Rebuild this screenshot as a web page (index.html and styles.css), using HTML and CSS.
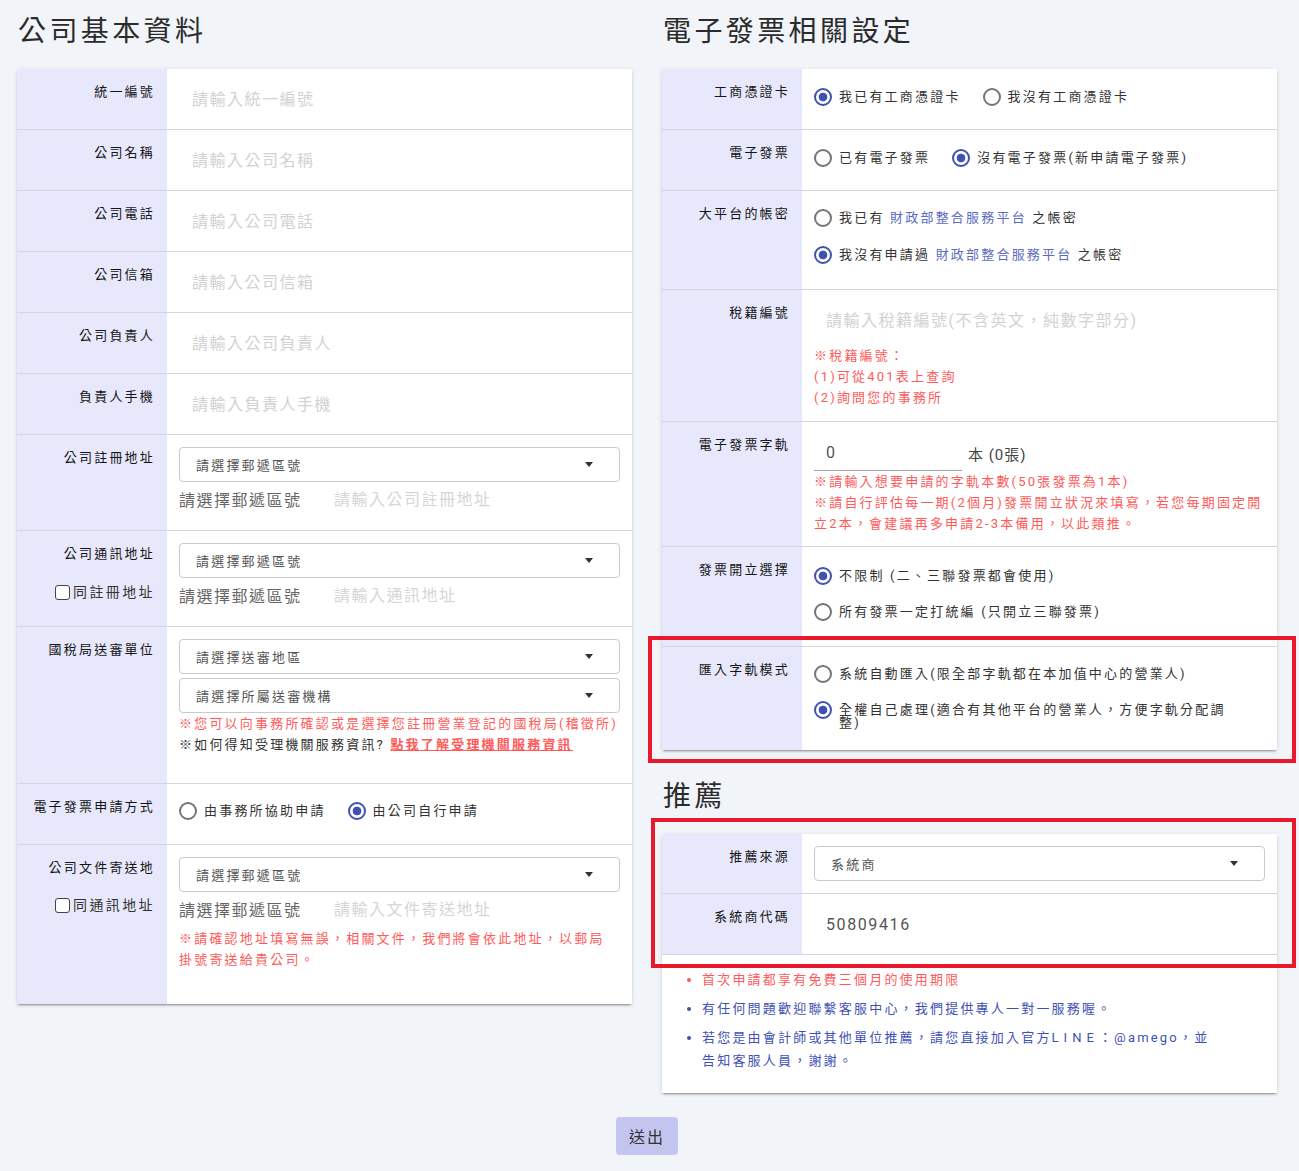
FILE: index.html
```html
<!DOCTYPE html>
<html lang="zh-Hant">
<head>
<meta charset="utf-8">
<title>公司基本資料</title>
<link rel="stylesheet" href="styles.css">
</head>
<body>
<div class="page">
  <div class="columns">
    <section class="col">
      <h2 class="title">公司基本資料</h2>
      <div class="card card-left">
        <div class="row">
          <div class="label">統一編號</div>
          <div class="value v-input"><input class="field" placeholder="請輸入統一編號"></div>
        </div>
        <div class="row">
          <div class="label">公司名稱</div>
          <div class="value v-input"><input class="field" placeholder="請輸入公司名稱"></div>
        </div>
        <div class="row">
          <div class="label">公司電話</div>
          <div class="value v-input"><input class="field" placeholder="請輸入公司電話"></div>
        </div>
        <div class="row">
          <div class="label">公司信箱</div>
          <div class="value v-input"><input class="field" placeholder="請輸入公司信箱"></div>
        </div>
        <div class="row">
          <div class="label">公司負責人</div>
          <div class="value v-input"><input class="field" placeholder="請輸入公司負責人"></div>
        </div>
        <div class="row">
          <div class="label">負責人手機</div>
          <div class="value v-input"><input class="field" placeholder="請輸入負責人手機"></div>
        </div>
        <div class="row">
          <div class="label">公司註冊地址</div>
          <div class="value v-select">
            <div class="select"><span>請選擇郵遞區號</span><i class="caret"></i></div>
            <div class="addr"><span class="zip">請選擇郵遞區號</span><input class="addr-input" placeholder="請輸入公司註冊地址"></div>
          </div>
        </div>
        <div class="row">
          <div class="label">公司通訊地址
            <label class="same"><input type="checkbox"><span>同註冊地址</span></label>
          </div>
          <div class="value v-select">
            <div class="select"><span>請選擇郵遞區號</span><i class="caret"></i></div>
            <div class="addr"><span class="zip">請選擇郵遞區號</span><input class="addr-input" placeholder="請輸入通訊地址"></div>
          </div>
        </div>
        <div class="row">
          <div class="label">國稅局送審單位</div>
          <div class="value v-select">
            <div class="select"><span>請選擇送審地區</span><i class="caret"></i></div>
            <div class="select select-next"><span>請選擇所屬送審機構</span><i class="caret"></i></div>
            <div class="notes notes-tax">
              <div class="red">※您可以向事務所確認或是選擇您註冊營業登記的國稅局(稽徵所)</div>
              <div class="dark">※如何得知受理機關服務資訊? <a class="red-link" href="#">點我了解受理機關服務資訊</a></div>
            </div>
          </div>
        </div>
        <div class="row">
          <div class="label">電子發票申請方式</div>
          <div class="value v-radios v-radios-left">
            <label class="opt"><input type="radio" name="apply"><span>由事務所協助申請</span></label>
            <label class="opt"><input type="radio" name="apply" checked><span>由公司自行申請</span></label>
          </div>
        </div>
        <div class="row">
          <div class="label">公司文件寄送地
            <label class="same same-2"><input type="checkbox"><span>同通訊地址</span></label>
          </div>
          <div class="value v-select">
            <div class="select"><span>請選擇郵遞區號</span><i class="caret"></i></div>
            <div class="addr"><span class="zip">請選擇郵遞區號</span><input class="addr-input" placeholder="請輸入文件寄送地址"></div>
            <div class="notes notes-mail red">※請確認地址填寫無誤，相關文件，我們將會依此地址，以郵局<br>掛號寄送給貴公司。</div>
          </div>
        </div>
      </div>
    </section>

    <section class="col">
      <h2 class="title">電子發票相關設定</h2>
      <div class="card card-right">
        <div class="row">
          <div class="label">工商憑證卡</div>
          <div class="value v-radios">
            <label class="opt"><input type="radio" name="card" checked><span>我已有工商憑證卡</span></label>
            <label class="opt"><input type="radio" name="card"><span>我沒有工商憑證卡</span></label>
          </div>
        </div>
        <div class="row">
          <div class="label">電子發票</div>
          <div class="value v-radios">
            <label class="opt"><input type="radio" name="einv"><span>已有電子發票</span></label>
            <label class="opt"><input type="radio" name="einv" checked><span>沒有電子發票(新申請電子發票)</span></label>
          </div>
        </div>
        <div class="row">
          <div class="label">大平台的帳密</div>
          <div class="value v-radios stack">
            <label class="opt"><input type="radio" name="plat"><span>我已有 <a class="blue-link" href="#">財政部整合服務平台</a> 之帳密</span></label>
            <label class="opt"><input type="radio" name="plat" checked><span>我沒有申請過 <a class="blue-link" href="#">財政部整合服務平台</a> 之帳密</span></label>
          </div>
        </div>
        <div class="row">
          <div class="label">稅籍編號</div>
          <div class="value v-tax">
            <input class="field field-in" placeholder="請輸入稅籍編號(不含英文，純數字部分)">
            <div class="notes notes-taxid red">
              <div>※稅籍編號：</div>
              <div>(1)可從401表上查詢</div>
              <div>(2)詢問您的事務所</div>
            </div>
          </div>
        </div>
        <div class="row">
          <div class="label">電子發票字軌</div>
          <div class="value v-qty">
            <div class="qty"><input class="qty-input" value="0"><span class="unit">本 (0張)</span></div>
            <div class="notes red">
              <div>※請輸入想要申請的字軌本數(50張發票為1本)</div>
              <div>※請自行評估每一期(2個月)發票開立狀況來填寫，若您每期固定開<br>立2本，會建議再多申請2-3本備用，以此類推。</div>
            </div>
          </div>
        </div>
        <div class="row">
          <div class="label">發票開立選擇</div>
          <div class="value v-radios stack stack-b">
            <label class="opt"><input type="radio" name="issue" checked><span>不限制 (二、三聯發票都會使用)</span></label>
            <label class="opt"><input type="radio" name="issue"><span>所有發票一定打統編 (只開立三聯發票)</span></label>
          </div>
        </div>
        <div class="row">
          <div class="label">匯入字軌模式</div>
          <div class="value v-radios stack stack-c">
            <label class="opt"><input type="radio" name="mode"><span>系統自動匯入(限全部字軌都在本加值中心的營業人)</span></label>
            <label class="opt multi"><input type="radio" name="mode" checked><span>全權自己處理(適合有其他平台的營業人，方便字軌分配調<br>整)</span></label>
          </div>
        </div>
      </div>

      <h2 class="title title-2">推薦</h2>
      <div class="card card-right">
        <div class="row">
          <div class="label">推薦來源</div>
          <div class="value v-select v-select-only">
            <div class="select"><span>系統商</span><i class="caret"></i></div>
          </div>
        </div>
        <div class="row">
          <div class="label">系統商代碼</div>
          <div class="value v-input"><input class="field field-value" value="50809416"></div>
        </div>
        <ul class="tips">
          <li class="tip-red">首次申請都享有免費三個月的使用期限</li>
          <li>有任何問題歡迎聯繫客服中心，我們提供專人一對一服務喔。</li>
          <li>若您是由會計師或其他單位推薦，請您直接加入官方<span class="latin">LINE</span>：@amego，並<br>告知客服人員，謝謝。</li>
        </ul>
      </div>
    </section>
  </div>

  <div class="actions"><button class="submit" type="button">送出</button></div>

  <div class="mark mark-1"></div>
  <div class="mark mark-2"></div>
</div>
</body>
</html>
```

FILE: styles.css
```css
* { box-sizing: border-box; }

html, body {
  margin: 0;
  padding: 0;
  background: #f1f4f9;
}

body {
  font-family: Roboto, "Noto Sans CJK TC", "Noto Sans", sans-serif;
  color: #333;
}

.page {
  position: relative;
  padding: 14px 0 0 17px;
  width: 1299px;
}

.columns {
  display: grid;
  grid-template-columns: 615px 615px;
  column-gap: 30px;
  align-items: start;
}

.title {
  margin: 0 0 19px;
  padding-left: 1px;
  font-size: 28px;
  line-height: 36px;
  font-weight: 400;
  letter-spacing: 3.4px;
  color: #2b2b2b;
}

.title-2 { margin-top: 29px; }

.card {
  background: #fff;
  border-radius: 2px;
  box-shadow: 0 3px 1px -2px rgba(0,0,0,.18), 0 2px 2px 0 rgba(0,0,0,.12), 0 1px 5px 0 rgba(0,0,0,.10);
  overflow: hidden;
}

.row {
  display: grid;
  border-bottom: 1px solid #d3d5dd;
}

.card-left .row { grid-template-columns: 150px 1fr; }
.card-right .row { grid-template-columns: 140px 1fr; }

.card > .row:last-child { border-bottom: none; }

.label {
  background: #e8e8fc;
  text-align: right;
  padding: 14px 12px 0 0;
  font-size: 13px;
  line-height: 18px;
  letter-spacing: 2.2px;
  font-weight: 400;
  color: #151515;
}

.value {
  background: #fff;
  min-width: 0;
}

/* plain text input rows */
.v-input {
  height: 60px;
  display: flex;
  align-items: center;
  padding: 0 12px 0 25px;
}
.card-right .v-input { padding-left: 24px; }

.field {
  border: 0;
  outline: 0;
  padding: 0;
  width: 100%;
  background: transparent;
  font-family: inherit;
  font-size: 16px;
  letter-spacing: 1.5px;
  color: #555;
}
.field::placeholder { color: #d2d2d2; }

.field-value { color: #555; letter-spacing: 1.6px; }

/* select rows */
.v-select { padding: 12px 12px 19px; }
.v-select-only { padding-bottom: 12px; }

.select {
  height: 35px;
  border: 1px solid #cacaca;
  border-radius: 4px;
  background: #fff;
  display: flex;
  align-items: center;
  justify-content: space-between;
  padding: 0 26px 0 16px;
  font-size: 13px;
  letter-spacing: 2.2px;
  color: #555;
}
.select-next { margin-top: 4px; }

.caret {
  width: 0;
  height: 0;
  border-left: 4px solid transparent;
  border-right: 4px solid transparent;
  border-top: 5px solid #333;
}

.addr {
  display: flex;
  align-items: center;
  height: 24px;
  margin-top: 5px;
  font-size: 16px;
  letter-spacing: 1.5px;
}
.zip { flex: none; width: 155px; color: #666; }
.addr-input {
  flex: 1;
  min-width: 0;
  border: 0;
  outline: 0;
  padding: 0;
  background: transparent;
  font-family: inherit;
  font-size: 16px;
  letter-spacing: 1.5px;
  color: #555;
}
.addr-input::placeholder { color: #d6d6d6; }

/* notes */
.notes {
  font-size: 13px;
  line-height: 21px;
  letter-spacing: 2.2px;
  white-space: nowrap;
}
.red { color: #ff5a5a; }
.dark { color: #333; }
.red-link { color: #ff5a5a; font-weight: 700; text-decoration: underline; }
.blue-link { color: #5c6bc0; text-decoration: none; }

.notes-tax { margin-bottom: 9px; }
.notes-mail { margin-top: 7px; margin-bottom: 15px; }
.notes-taxid { margin-top: 7px; }

/* checkbox under label */
.same {
  display: flex;
  justify-content: flex-end;
  align-items: center;
  margin-top: 19px;
  line-height: 20px;
  font-size: 14px;
  letter-spacing: 2.4px;
  font-weight: 400;
  color: #333;
}
.same-2 { margin-top: 18px; }
.same input {
  appearance: none;
  -webkit-appearance: none;
  width: 15px;
  height: 15px;
  margin: 0 3px 0 0;
  border: 1px solid #444;
  border-radius: 3px;
  background: #fff;
}

/* radios */
.v-radios {
  display: flex;
  align-items: flex-start;
  padding: 18px 12px 22px;
}
.v-radios-left { padding: 17px 12px 23px; }

.opt {
  display: flex;
  align-items: center;
  height: 20px;
  margin-right: 22px;
  font-size: 13px;
  line-height: 20px;
  letter-spacing: 2.2px;
  color: #333;
  white-space: nowrap;
}
.opt input {
  appearance: none;
  -webkit-appearance: none;
  flex: none;
  width: 18px;
  height: 18px;
  margin: 0 7px 0 0;
  border: 2px solid #757575;
  border-radius: 50%;
  background: #fff;
}
.opt input:checked {
  border-color: #3f51b5;
  background: radial-gradient(circle, #3f51b5 0 4px, #fff 4.7px);
}

.stack { flex-direction: column; padding-top: 17px; padding-bottom: 24px; }
.stack .opt { margin-right: 0; }
.stack .opt + .opt { margin-top: 17px; }
.stack-b { padding-top: 19px; padding-bottom: 24px; }
.stack-b .opt + .opt { margin-top: 16px; }
.stack-c { padding-top: 17px; padding-bottom: 21px; }
.stack-c .opt + .opt { margin-top: 16px; }

.opt.multi { align-items: flex-start; height: auto; }
.opt.multi input { margin-top: 1px; }
.opt.multi span { line-height: 13px; padding-top: 3px; }

/* tax id row */
.v-tax { padding: 12px 12px 13px; }
.field-in { height: 36px; padding-left: 12px; }

/* qty row */
.v-qty { padding: 13px 12px 12px; }
.qty { display: flex; align-items: center; height: 36px; }
.qty-input {
  width: 148px;
  height: 36px;
  border: 0;
  border-bottom: 1px solid #a3a3a3;
  outline: 0;
  padding: 0 0 0 12px;
  background: transparent;
  font-family: inherit;
  font-size: 16px;
  color: #555;
}
.unit {
  margin-left: 6px;
  font-size: 15px;
  letter-spacing: 1px;
  color: #444;
}

/* tips */
.tips {
  margin: 0;
  padding: 13px 20px 21px 40px;
  list-style: disc;
  font-size: 13px;
  line-height: 23px;
  letter-spacing: 2.2px;
  color: #3f51b5;
  white-space: nowrap;
}
.tips li + li { margin-top: 6px; }
.tips .tip-red { color: #ff5a5a; }
.latin { letter-spacing: 5px; }

/* submit */
.actions {
  width: 1260px;
  margin-top: 24px;
  display: flex;
  justify-content: center;
}
.submit {
  height: 38px;
  padding: 0 13px;
  border: 0;
  border-radius: 4px;
  background: #c3c5ee;
  font-family: inherit;
  font-size: 16px;
  letter-spacing: 2px;
  color: #333;
}

/* red annotation frames drawn over the screenshot */
.mark {
  position: absolute;
  border: 4px solid #e8192c;
  pointer-events: none;
}
.mark-1 { left: 648px; top: 636px; width: 648px; height: 127px; }
.mark-2 { left: 651px; top: 818px; width: 645px; height: 150px; }
```
